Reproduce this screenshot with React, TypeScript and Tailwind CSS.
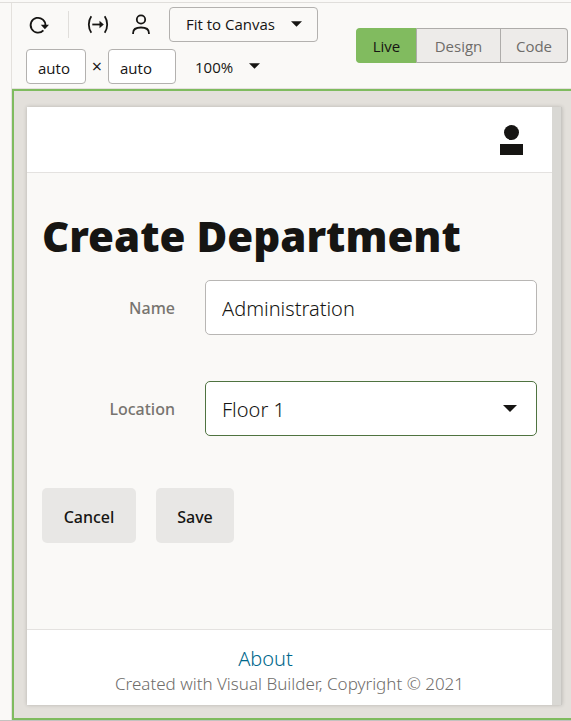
import { useState } from "react";
import type { ReactNode } from "react";

const modes = [
  { name: "Live", width: "w-[61px]" },
  { name: "Design", width: "w-[84px]" },
  { name: "Code", width: "w-[67px]" },
];

function Caret({ className }: { className: string }) {
  return (
    <svg viewBox="0 0 14 7" className={className} fill="#161513" aria-hidden="true">
      <path d="M0 0H14L7 7Z" />
    </svg>
  );
}

function IconButton({ label, children }: { label: string; children: ReactNode }) {
  return (
    <button type="button" aria-label={label} className="flex size-6 items-center justify-center">
      {children}
    </button>
  );
}

function Toolbar() {
  const [mode, setMode] = useState("Live");
  const inputClass = "h-[35px] rounded-[4px] border border-[#b3b1af] bg-white px-[11px] pt-0.5 text-[15px] text-[#161513]";
  return (
    <div className="flex items-start justify-between gap-2 border-b border-[#e4e1dd] pt-1 pr-[3px] pb-1 pl-3.5 font-['Open_Sans','Noto_Sans',sans-serif]">
      <div className="flex flex-col gap-[7px]">
        <div className="flex items-center">
          <IconButton label="Reload">
            <svg viewBox="0 0 24 24" className="size-6" fill="none" stroke="#161513" strokeWidth="1.8" aria-hidden="true">
              <path d="M17.4 17.3A7.4 7.4 0 1 1 19.4 12.8" />
              <path d="M14.8 11.8H23L18.9 16.2Z" fill="#161513" stroke="none" />
            </svg>
          </IconButton>
          <div className="mr-[17px] ml-[18px] h-[27px] w-px bg-[#e0dedb]" />
          <IconButton label="Variables">
            <svg viewBox="0 0 24 24" className="size-6" fill="none" stroke="#161513" strokeWidth="1.8" aria-hidden="true">
              <path d="M5.3 3.2C2 8 2 15 5.3 19.8M18.7 3.2C22 8 22 15 18.7 19.8" />
              <path d="M6.300 11.500H15" />
              <path d="M13.500 7.800L17.800 11.500L13.500 15.200Z" fill="#161513" stroke="none" />
            </svg>
          </IconButton>
          <div className="w-[19px]" />
          <IconButton label="User">
            <svg viewBox="0 0 24 24" className="size-6" fill="none" stroke="#161513" strokeWidth="1.8" aria-hidden="true">
              <circle cx="12" cy="6.500" r="4.200" />
              <path d="M4.100 20.900V20C4.100 16.500 7 14.500 12 14.500S19.900 16.500 19.900 20V20.900" />
            </svg>
          </IconButton>
          <div className="relative ml-4 flex items-center">
            <select
              aria-label="Canvas size"
              className="h-[35px] w-[149px] appearance-none rounded-[4px] border border-[#b3b1af] bg-transparent pl-4 text-[15px] text-[#161513]"
            >
              <option>Fit to Canvas</option>
            </select>
            <Caret className="pointer-events-none absolute right-4 mb-0.5 h-[6px] w-[11px]" />
          </div>
        </div>
        <div className="flex items-center">
          <input aria-label="Width" defaultValue="auto" className={inputClass + " w-[60px]"} />
          <span className="w-[22px] text-center text-[18px] text-[#161513]">×</span>
          <input aria-label="Height" defaultValue="auto" className={inputClass + " w-[68px]"} />
          <div className="relative ml-[19px] flex items-center">
            <select
              aria-label="Zoom"
              className="h-[35px] w-[68px] appearance-none bg-transparent pt-0.5 text-[15px] text-[#161513]"
            >
              <option>100%</option>
            </select>
            <Caret className="pointer-events-none absolute right-[3px] mb-0.5 h-[6px] w-[11px]" />
          </div>
        </div>
      </div>
      <div className="mt-[21px] flex h-[35px] shrink-0 text-[15px]">
        {modes.map(({ name, width }) => (
          <button
            key={name}
            type="button"
            aria-pressed={mode === name}
            onClick={() => setMode(name)}
            className={
              "border-y border-r pt-0.5 first:rounded-l-[4px] first:border-l last:rounded-r-[4px] " +
              width +
              (mode === name
                ? " border-y-[#81bb5f] border-r-[#aeacaa] border-l-[#81bb5f] bg-[#81bb5f] text-[#161513]"
                : " border-[#aeacaa] bg-[#edebe9] text-[#6f6d6a]")
            }
          >
            {name}
          </button>
        ))}
      </div>
    </div>
  );
}

function AppPage() {
  const labelClass = "w-[133px] shrink-0 text-right text-[16px] font-medium text-[#77746f]";
  const fieldClass = "h-[55px] w-full rounded-[5px] border bg-white px-4 pt-0.5 text-[20px] font-light text-[#161513]";
  return (
    <div className="flex flex-1 border-r border-[#c9c7c3] bg-[#d9d8d4] pr-[9px] font-['Noto_Sans','Open_Sans',sans-serif] shadow-[0_0_4px_rgba(0,0,0,0.2)]">
      <div className="flex flex-1 flex-col bg-[#faf9f7]">
        <header className="flex h-[66px] items-center justify-end border-b border-[#e4e2e0] bg-white pr-[29px]">
          <button type="button" aria-label="Account">
            <svg viewBox="0 0 23 30" className="h-[30px] w-[23px]" fill="#161513" aria-hidden="true">
              <circle cx="11.500" cy="7.500" r="7.500" />
              <path d="M0 19H23V30H0Z" />
            </svg>
          </button>
        </header>
        <main className="flex-1 px-[15px] pt-[35px]">
          <h1 className="text-[42px] leading-[56px] font-black whitespace-nowrap text-[#161513]">Create Department</h1>
          <form onSubmit={(e) => e.preventDefault()}>
            <div className="mt-4 flex items-center gap-[30px]">
              <label htmlFor="name" className={labelClass}>Name</label>
              <input id="name" defaultValue="Administration" className={fieldClass + " border-[#b8b6b4]"} />
            </div>
            <div className="mt-[46px] flex items-center gap-[30px]">
              <label htmlFor="location" className={labelClass}>Location</label>
              <div className="relative flex w-full items-center">
                <select id="location" className={fieldClass + " appearance-none border-[#4f7340]"}>
                  <option>Floor 1</option>
                </select>
                <Caret className="pointer-events-none absolute right-5 h-[7px] w-[14px]" />
              </div>
            </div>
            <div className="mt-[52px] flex gap-5 text-[16px] font-medium text-[#161513]">
              <button type="button" className="h-[55px] w-[94px] rounded-[5px] bg-[#e8e7e5] pt-0.5">Cancel</button>
              <button type="submit" className="h-[55px] w-[78px] rounded-[5px] bg-[#e8e7e5] pt-0.5">Save</button>
            </div>
          </form>
        </main>
        <footer className="flex h-[76px] flex-col items-center border-t border-[#e4e2e0] bg-white pt-4">
          <a href="#about" className="mr-12 text-[20px] leading-[26px] font-light text-[#00688c]">About</a>
          <p className="text-[17px] leading-6 font-light text-[#6f6d6a]">Created with Visual Builder, Copyright © 2021</p>
        </footer>
      </div>
    </div>
  );
}

export default function App() {
  return (
    <div className="flex min-h-screen flex-col border-b border-[#c4c2c0] bg-[#faf9f7] pt-0.5">
      <div className="flex flex-1 border-t border-[#e0dedb]">
        <div className="w-3 shrink-0 border-r border-[#e4e1dd]" />
        <div className="flex min-w-0 flex-1 flex-col">
          <Toolbar />
          <div className="flex flex-1 border-2 border-r-0 border-[#7fbb5f] bg-[#e3e0db] pt-4 pr-[9px] pb-[13px] pl-[13px]">
            <AppPage />
          </div>
        </div>
      </div>
    </div>
  );
}
